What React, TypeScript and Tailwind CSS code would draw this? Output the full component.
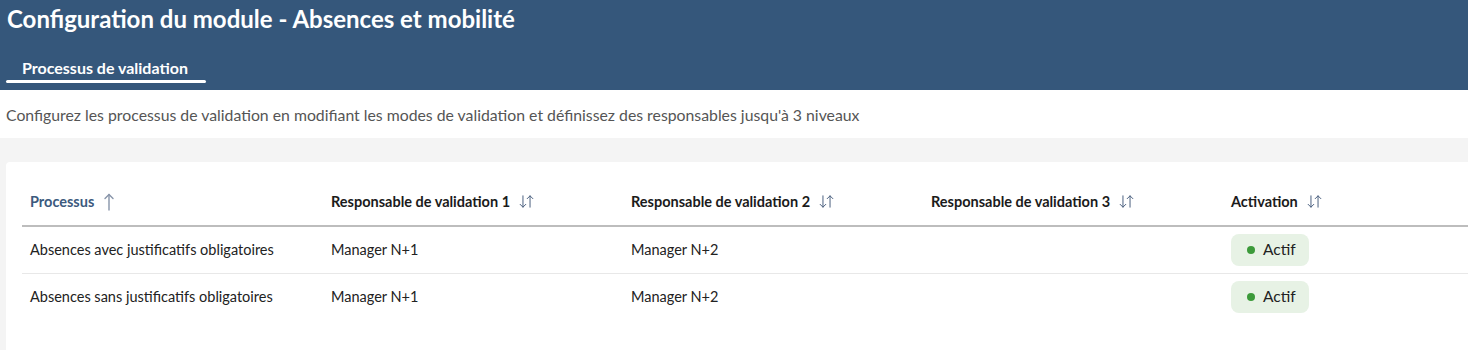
import { ArrowDownUp } from "lucide-react";

const rows = [
  { processus: "Absences avec justificatifs obligatoires", rv1: "Manager N+1", rv2: "Manager N+2", rv3: "" },
  { processus: "Absences sans justificatifs obligatoires", rv1: "Manager N+1", rv2: "Manager N+2", rv3: "" },
];

const columns = [
  "Responsable de validation 1",
  "Responsable de validation 2",
  "Responsable de validation 3",
  "Activation",
];

function SortUp() {
  return (
    <svg width="10" height="18" viewBox="0 0 10 18" fill="none" stroke="currentColor" strokeWidth="1.4" strokeLinecap="round" strokeLinejoin="round" className="text-[#8794a9]">
      <path d="M5 1.5V17" />
      <path d="M1 5.5L5 1.5L9 5.5" />
    </svg>
  );
}

export default function App() {
  return (
    <div className="min-h-[354px] bg-white font-['Lato','Liberation_Sans',sans-serif] text-[#222]">
      {/* Header */}
      <div className="bg-[#35577b] h-[90px] flex flex-col">
        <h1 className="pl-[7px] pt-[3px] text-[24px] leading-[32px] font-bold text-white">
          Configuration du module - Absences et mobilité
        </h1>
        <div className="mt-[21px] pl-[6px]">
          <div className="inline-flex flex-col w-[200px]">
            <span className="pl-[16px] text-[16px] leading-[20px] font-bold text-white">
              Processus de validation
            </span>
            <span className="mt-[2px] h-[3px] rounded-full bg-white" />
          </div>
        </div>
      </div>

      <p className="pl-[6px] pt-[15px] pb-[14px] text-[15.8px] leading-[19px] text-[#555]">
        Configurez les processus de validation en modifiant les modes de validation et définissez des responsables jusqu'à 3 niveaux
      </p>

      {/* Table area */}
      <div className="bg-[#f4f4f4] pt-[24px] pl-[6px]">
        <div className="bg-white rounded-tl-[4px] pl-[16px] pt-[16px] pb-[30px]">
          <table className="w-full border-collapse text-[14.5px]">
            <thead>
              <tr className="border-b-2 border-[#bdbdbd]">
                <th className="w-[301px] h-[48px] pl-[8px] text-left align-middle">
                  <span className="inline-flex items-center gap-[10px] font-bold text-[#3c5a7e]">
                    Processus
                    <SortUp />
                  </span>
                </th>
                {columns.map((c) => (
                  <th key={c} className="w-[300px] pl-[8px] text-left align-middle last:w-auto">
                    <span className="inline-flex items-center gap-[8px] font-bold text-[#1b1b1b]">
                      {c}
                      <ArrowDownUp className="w-[17px] h-[17px] text-[#4a5f7e]" strokeWidth={1.4} />
                    </span>
                  </th>
                ))}
              </tr>
            </thead>
            <tbody>
              {rows.map((r, i) => (
                <tr key={i} className={i === 0 ? "border-b border-[#e8e8e8]" : ""}>
                  <td className="h-[47px] pl-[8px] text-[#222]">{r.processus}</td>
                  <td className="pl-[8px] text-[#222]">{r.rv1}</td>
                  <td className="pl-[8px] text-[#222]">{r.rv2}</td>
                  <td className="pl-[8px] text-[#222]">{r.rv3}</td>
                  <td className="pl-[8px]">
                    <span className="inline-flex items-center gap-[8px] h-[32px] w-[78px] pl-[16px] rounded-[8px] bg-[#e7f2e5] text-[15.5px] text-[#222]">
                      <span className="w-[8px] h-[8px] rounded-full bg-[#3c9a3a]" />
                      Actif
                    </span>
                  </td>
                </tr>
              ))}
            </tbody>
          </table>
        </div>
      </div>
    </div>
  );
}
